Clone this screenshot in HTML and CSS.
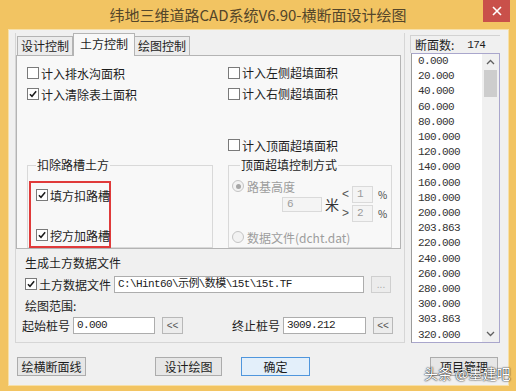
FILE: index.html
```html
<!DOCTYPE html>
<html lang="zh-CN">
<head>
  <meta charset="UTF-8">
  <meta name="viewport" content="width=device-width, initial-scale=1.0">
  <title>横断面设计绘图</title>

  <link rel="stylesheet" href="styles.css">
</head>
<body>
  <div class="window">
    <div class="titlebar">
      <span></span>
      <h1 class="title">纬地三维道路CAD系统V6.90-横断面设计绘图</h1>
      <span class="close">
        <svg width="10" height="10" viewBox="0 0 10 10"><path d="M1 1 L9 9 M9 1 L1 9" stroke="#fff" stroke-width="1.6"/></svg>
      </span>
    </div>

    <div class="client">
      <div class="main">
        <div class="left">
          <div class="tabs">
            <span class="tab">设计控制</span>
            <span class="tab active">土方控制</span>
            <span class="tab">绘图控制</span>
          </div>

          <div class="panel">
            <div class="checks">
              <div class="col col-left">
                <label class="chk"><span class="box"></span>计入排水沟面积</label>
                <label class="chk"><span class="box"><svg viewBox="0 0 12 12"><path d="M2.3 6.2 L4.8 8.8 L9.8 2.8" fill="none" stroke="#1b1b1b" stroke-width="1.8"/></svg></span>计入清除表土面积</label>
              </div>
              <div class="col">
                <label class="chk"><span class="box"></span>计入左侧超填面积</label>
                <label class="chk"><span class="box"></span>计入右侧超填面积</label>
                <label class="chk chk-far"><span class="box"></span>计入顶面超填面积</label>
              </div>
            </div>

            <div class="groups">
              <fieldset class="group group-trench">
                <legend>扣除路槽土方</legend>
                <div class="mark">
                  <label class="chk"><span class="box"><svg viewBox="0 0 12 12"><path d="M2.3 6.2 L4.8 8.8 L9.8 2.8" fill="none" stroke="#1b1b1b" stroke-width="1.8"/></svg></span>填方扣路槽</label>
                  <label class="chk chk-low"><span class="box"><svg viewBox="0 0 12 12"><path d="M2.3 6.2 L4.8 8.8 L9.8 2.8" fill="none" stroke="#1b1b1b" stroke-width="1.8"/></svg></span>挖方加路槽</label>
                </div>
              </fieldset>

              <fieldset class="group group-top">
                <legend>顶面超填控制方式</legend>
                <div class="height-grid">
                  <label class="radio radio-height"><span class="dot on"></span>路基高度</label>
                  <span class="field field-m">6</span>
                  <span class="unit">米</span>
                  <span class="arrow arrow-up">&lt;</span>
                  <span class="field field-pct field-up">1</span>
                  <span class="pct pct-up">%</span>
                  <span class="arrow arrow-down">&gt;</span>
                  <span class="field field-pct field-down">2</span>
                  <span class="pct pct-down">%</span>
                </div>
                <label class="radio radio-file"><span class="dot"></span>数据文件(dcht.dat)</label>
              </fieldset>
            </div>
          </div>

          <div class="output">
            <div class="caption">生成土方数据文件</div>
            <div class="row row-file">
              <label class="chk"><span class="box"><svg viewBox="0 0 12 12"><path d="M2.3 6.2 L4.8 8.8 L9.8 2.8" fill="none" stroke="#1b1b1b" stroke-width="1.8"/></svg></span>土方数据文件</label>
              <span class="input input-path mono">C:\Hint60\示例\数模\15t\15t.TF</span>
              <span class="mini disabled">...</span>
            </div>
            <div class="caption caption-range">绘图范围:</div>
            <div class="row row-range">
              <span class="text">起始桩号</span>
              <span class="input input-start mono">0.000</span>
              <span class="mini">&lt;&lt;</span>
              <span class="text text-end">终止桩号</span>
              <span class="input input-end mono">3009.212</span>
              <span class="mini mini-end">&lt;&lt;</span>
            </div>
          </div>
        </div>

        <div class="right">
          <div class="count"><span>断面数:</span><span class="mono">174</span></div>
          <div class="list">
            <ul class="items mono">
              <li>0.000</li>
              <li>20.000</li>
              <li>40.000</li>
              <li>60.000</li>
              <li>80.000</li>
              <li>100.000</li>
              <li>120.000</li>
              <li>140.000</li>
              <li>160.000</li>
              <li>180.000</li>
              <li>200.000</li>
              <li>203.863</li>
              <li>220.000</li>
              <li>240.000</li>
              <li>260.000</li>
              <li>280.000</li>
              <li>300.000</li>
              <li>303.863</li>
              <li>320.000</li>
            </ul>
            <div class="scrollbar">
              <span class="sb-btn"><svg width="9" height="6" viewBox="0 0 9 6"><path d="M1 5 L4.5 1.5 L8 5" fill="none" stroke="#606060" stroke-width="1.3"/></svg></span>
              <span class="sb-thumb"></span>
              <span class="sb-track"></span>
              <span class="sb-btn"><svg width="9" height="6" viewBox="0 0 9 6"><path d="M1 1 L4.5 4.5 L8 1" fill="none" stroke="#606060" stroke-width="1.3"/></svg></span>
            </div>
          </div>
        </div>
      </div>

      <div class="buttons">
        <span class="btn btn-draw">绘横断面线</span>
        <span class="btn btn-design">设计绘图</span>
        <span class="btn btn-ok">确定</span>
        <span class="btn btn-project">项目管理</span>
      </div>
    </div>

    <div class="watermark">头条 @墨建吧</div>
  </div>
</body>
</html>
```

FILE: styles.css
```css
* {
  box-sizing: border-box;
  padding: 0;
  margin: 0;
}

body {
  width: 516px;
  height: 391px;
  overflow: hidden;
  background-color: #f2c462;
  font-family: 'Noto Sans CJK SC', 'Liberation Sans', sans-serif;
  font-size: 12px;
  color: #1d1d1d;
}

.mono {
  font-family: 'Liberation Mono', 'Noto Sans CJK SC', monospace;
  font-size: 11px;
  letter-spacing: -0.6px;
}

.window {
  position: relative;
  width: 516px;
  height: 391px;
  display: flex;
  flex-direction: column;
}

/* title bar */

.titlebar {
  height: 30px;
  display: grid;
  grid-template-columns: 1fr auto 1fr;
}

.title {
  font-size: 15px;
  font-weight: normal;
  line-height: 30px;
  color: #54462a;
}

.close {
  justify-self: end;
  width: 27px;
  height: 22px;
  margin-right: 6px;
  background-color: #c9504a;
  display: flex;
  align-items: center;
  justify-content: center;
}

/* client area */

.client {
  height: 355px;
  margin: 0 8px 0 9px;
  background-color: #f0f0f0;
  box-shadow: 0 0 0 1px #f7e0a8;
  display: flex;
  flex-direction: column;
}

.main {
  display: flex;
  padding: 3px 0 0 6px;
}

.left {
  width: 390px;
  height: 310px;
  border: 1px solid #d6d6d6;
  border-top: none;
}

.tabs {
  height: 22px;
  display: flex;
  align-items: flex-end;
  padding-left: 1px;
}

.tab {
  height: 19px;
  padding-top: 1px;
  text-align: center;
  border: 1px solid #b4b4b4;
  border-bottom: none;
  background-color: #ececec;
  line-height: 16px;
}

.tab:nth-child(1) {
  width: 56px;
}

.tab:nth-child(3) {
  width: 55px;
  border-left: none;
}

.tab.active {
  width: 62px;
  height: 23px;
  margin-bottom: -1px;
  background-color: #f8f8f8;
  line-height: 18px;
  position: relative;
}

.panel {
  width: 385px;
  height: 194px;
  border: 1px solid #b4b4b4;
  background-color: #f8f8f8;
  padding: 7px 0 0 10px;
}

.checks {
  display: flex;
  height: 92px;
}

.col {
  display: flex;
  flex-direction: column;
  gap: 1px;
}

.col-left {
  width: 201px;
}

.chk {
  height: 20px;
  display: flex;
  align-items: center;
  gap: 2px;
  white-space: nowrap;
}

.chk-far {
  margin-top: 31px;
}

.box {
  width: 12px;
  height: 12px;
  border: 1px solid #7a7a7a;
  background-color: #fff;
  display: flex;
}

.box svg {
  width: 10px;
  height: 10px;
}

.groups {
  display: flex;
  gap: 15px;
  margin-top: 3px;
}

.group {
  height: 90px;
  border: 1px solid #d9d9d9;
  padding: 0;
}

.group legend {
  margin-left: 8px;
  padding: 0 1px;
  line-height: 14px;
}

.group-trench {
  width: 186px;
}

.group-top {
  width: 164px;
  padding-left: 3px;
}

.mark {
  width: 82px;
  height: 67px;
  margin: 9px 0 0 1px;
  border: 2px solid #e03a3a;
  padding: 2px 0 0 5px;
}

.chk-low {
  margin-top: 20px;
}

/* disabled height controls */

.height-grid {
  margin-top: 8px;
  display: grid;
  grid-template-columns: 50px 40px 20px 10px 21px auto;
  grid-template-rows: 23px 19px;
  color: #9b9b9b;
}

.radio {
  display: flex;
  align-items: center;
  gap: 3px;
  height: 12px;
  color: #9d9d9d;
  white-space: nowrap;
}

.radio-height {
  grid-row: 1;
  grid-column: 1 / 4;
  align-self: start;
}

.radio-file {
  margin-top: 9px;
}

.dot {
  width: 12px;
  height: 12px;
  border: 1px solid #c4c4c4;
  border-radius: 50%;
  background-color: #f2f2f2;
  display: flex;
  align-items: center;
  justify-content: center;
}

.dot.on::after {
  content: '';
  width: 5px;
  height: 5px;
  border-radius: 50%;
  background-color: #a6a6a6;
}

.field {
  height: 17px;
  border: 1px solid #dadada;
  background-color: #f4f4f4;
  padding-left: 4px;
  font-family: 'Liberation Mono', monospace;
  font-size: 11px;
  line-height: 15px;
}

.field-m {
  grid-row: 1 / 3;
  grid-column: 2;
  height: 15px;
  line-height: 13px;
  align-self: center;
  margin-top: 6px;
}

.unit {
  grid-row: 1 / 3;
  grid-column: 3;
  align-self: center;
  margin: 6px 0 0 3px;
  font-size: 14px;
  color: #333;
}

.arrow {
  grid-column: 4;
  height: 17px;
  line-height: 17px;
  font-family: 'Liberation Sans', sans-serif;
  font-size: 12px;
  color: #555;
}

.arrow-up,
.field-up,
.pct-up {
  grid-row: 1;
  align-self: end;
}

.arrow-down,
.field-down,
.pct-down {
  grid-row: 2;
  align-self: end;
}

.field-pct {
  grid-column: 5;
}

.pct {
  grid-column: 6;
  padding-left: 5px;
  height: 17px;
  line-height: 17px;
  font-size: 10px;
  color: #444;
}

/* output file + range */

.output {
  padding-top: 7px;
}

.caption {
  line-height: 14px;
  padding-left: 9px;
}

.caption-range {
  margin-top: 6px;
}

.row {
  height: 18px;
  display: flex;
  align-items: center;
}

.row-file {
  margin-top: 5px;
  padding-left: 9px;
}

.row-range {
  margin-top: 3px;
  padding-left: 6px;
}

.input {
  height: 17px;
  border: 1px solid #adadad;
  background-color: #fff;
  padding-left: 3px;
  line-height: 15px;
  color: #222;
  white-space: nowrap;
  overflow: hidden;
}

.input-path {
  width: 250px;
  margin-left: 3px;
}

.input-start {
  width: 82px;
  margin-left: 3px;
}

.input-end {
  width: 83px;
  margin-left: 3px;
}

.text-end {
  margin-left: 49px;
}

.mini {
  width: 21px;
  height: 17px;
  margin-left: 7px;
  border: 1px solid #b8b8b8;
  background-color: #ececec;
  text-align: center;
  font-family: 'Liberation Sans', sans-serif;
  font-size: 10px;
  line-height: 15px;
  color: #555;
}

.mini-end {
  width: 20px;
}

.mini.disabled {
  width: 20px;
  border-color: #cfcfcf;
  color: #aaa;
}

/* section list */

.right {
  margin-left: 2px;
  padding-top: 2px;
  width: 98px;
}

.count {
  height: 18px;
  margin-left: 3px;
  width: 90px;
  border-top: 1px solid #d2d2d2;
  border-left: 1px solid #d2d2d2;
  display: flex;
  align-items: center;
  padding-left: 4px;
  gap: 13px;
}

.list {
  width: 89px;
  height: 290px;
  margin-left: 4px;
  border: 1px solid #a9a6cc;
  border-left-color: #9c9c9c;
  background-color: #fff;
  display: flex;
  justify-content: space-between;
}

.items {
  list-style: none;
  padding-left: 6px;
  line-height: 15.2px;
  color: #333;
}

.scrollbar {
  width: 17px;
  background-color: #f0f0f0;
  display: flex;
  flex-direction: column;
}

.sb-btn {
  height: 16px;
  display: flex;
  align-items: center;
  justify-content: center;
}

.sb-thumb {
  height: 27px;
  margin: 0 2px;
  background-color: #cdcdcd;
}

.sb-track {
  flex: 1;
}

/* bottom buttons */

.buttons {
  display: flex;
  margin-top: 14px;
  padding-left: 8px;
}

.btn {
  height: 19px;
  border: 1px solid #acacac;
  background-color: #e6e6e6;
  text-align: center;
  line-height: 17px;
}

.btn-draw {
  width: 69px;
}

.btn-design {
  width: 67px;
  margin-left: 69px;
}

.btn-ok {
  width: 69px;
  margin-left: 19px;
  border-color: #4f96dd;
  background-color: #e3effa;
}

.btn-project {
  width: 68px;
  margin-left: 120px;
}

.watermark {
  position: absolute;
  left: 424px;
  top: 364px;
  font-size: 14px;
  line-height: 18px;
  color: #fff;
  text-shadow: 0 0 2px #222, 0 0 1px #000;
  white-space: nowrap;
}
```
